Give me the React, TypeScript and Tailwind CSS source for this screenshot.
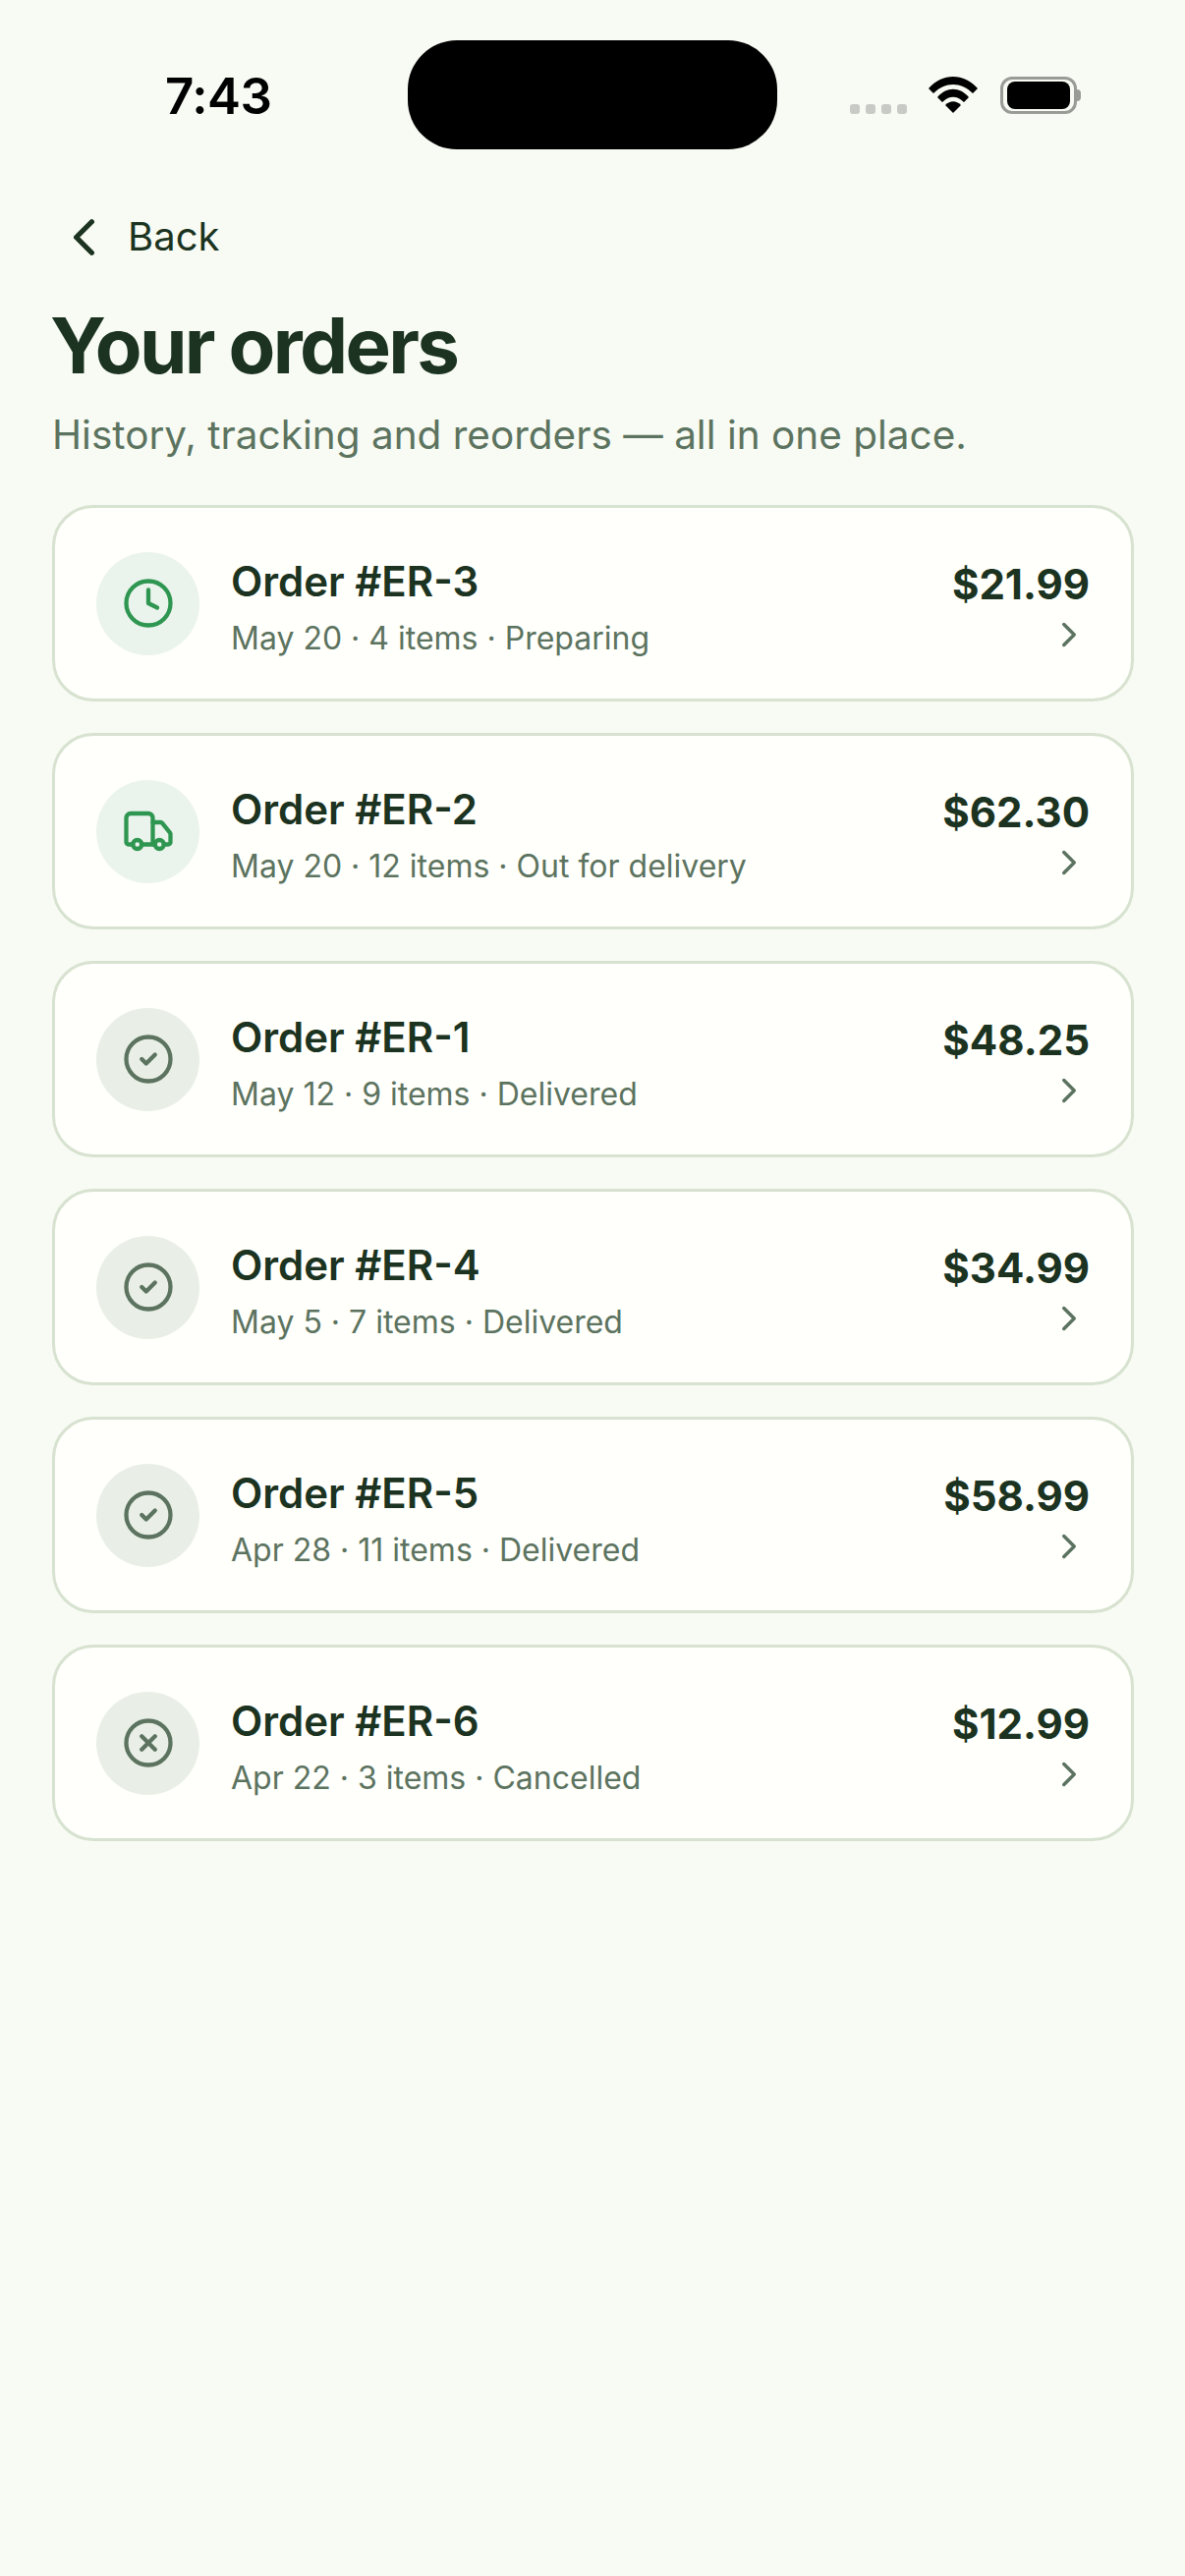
import { ChevronLeft, ChevronRight, CircleCheck, CircleX, Clock, Truck } from "lucide-react";
import type { LucideIcon } from "lucide-react";

interface Order {
  id: string;
  meta: string;
  total: string;
  icon: LucideIcon;
  active?: boolean;
}

const orders: Order[] = [
  { id: "ER-3", meta: "May 20 · 4 items · Preparing", total: "$21.99", icon: Clock, active: true },
  { id: "ER-2", meta: "May 20 · 12 items · Out for delivery", total: "$62.30", icon: Truck, active: true },
  { id: "ER-1", meta: "May 12 · 9 items · Delivered", total: "$48.25", icon: CircleCheck },
  { id: "ER-4", meta: "May 5 · 7 items · Delivered", total: "$34.99", icon: CircleCheck },
  { id: "ER-5", meta: "Apr 28 · 11 items · Delivered", total: "$58.99", icon: CircleCheck },
  { id: "ER-6", meta: "Apr 22 · 3 items · Cancelled", total: "$12.99", icon: CircleX },
];

function StatusBar() {
  return (
    <div className="relative h-[153px] shrink-0">
      <div className="absolute left-[415px] top-[41px] h-[111px] w-[376px] rounded-[50px] bg-black" />
      <div className="absolute left-[168px] top-[68px] font-['Inter',sans-serif] text-[51px] font-semibold leading-[60px] tracking-[-0.5px] text-black">
        7:43
      </div>
      <div className="absolute left-[865px] top-[106px] flex gap-[6px]">
        <div className="h-[10px] w-[10px] rounded-[3px] bg-[#c8cac6]" />
        <div className="h-[10px] w-[10px] rounded-[3px] bg-[#c8cac6]" />
        <div className="h-[10px] w-[10px] rounded-[3px] bg-[#c8cac6]" />
        <div className="h-[10px] w-[10px] rounded-[3px] bg-[#c8cac6]" />
      </div>
      <svg className="absolute left-[945px] top-[78px]" width="50" height="38" viewBox="0 0 50 38" fill="black">
        <path d="M0 12 C14 -4 36 -4 50 12 L45 17 C33 5 17 5 5 17 Z" />
        <path d="M9 21 C18 10 32 10 41 21 L36 26 C29 19 21 19 14 26 Z" />
        <path d="M17 29 C22 24 28 24 33 29 L25 37 Z" />
      </svg>
      <div className="absolute left-[1018px] top-[78px] flex h-[38px] w-[78px] items-center justify-center rounded-[12px] border-[3px] border-[#9a9b97]">
        <div className="h-[28px] w-[64px] rounded-[8px] bg-black" />
      </div>
      <div className="absolute left-[1096px] top-[91px] h-[12px] w-[4px] rounded-r-[4px] bg-[#9a9b97]" />
    </div>
  );
}

function OrderRow({ order }: { order: Order }) {
  const Icon = order.icon;
  return (
    <div className="flex h-[200px] items-center rounded-[42px] border-[3px] border-[#d7e2d0] bg-[#fffffb] pl-[42px] pr-[42px]">
      <div
        className={
          order.active
            ? "flex h-[105px] w-[105px] shrink-0 items-center justify-center rounded-full bg-[#eaf3ec] text-[#2e9650]"
            : "flex h-[105px] w-[105px] shrink-0 items-center justify-center rounded-full bg-[#e9efe6] text-[#5c7360]"
        }
      >
        <Icon size={54} strokeWidth={1.9} />
      </div>
      <div className="ml-[32px] flex min-w-0 flex-1 flex-col pt-[10px]">
        <div className="text-[42px] font-semibold leading-[54px] text-[#1b3320]">Order #{order.id}</div>
        <div className="mt-[7px] text-[32px] leading-[48px] text-[#5c7360]">{order.meta}</div>
      </div>
      <div className="flex shrink-0 flex-col items-end pt-[6px]">
        <div className="text-[42px] font-bold leading-[54px] text-[#1b3320]">{order.total}</div>
        <ChevronRight size={42} strokeWidth={2} className="mt-[3px] text-[#5c7360]" />
      </div>
    </div>
  );
}

export default function App() {
  return (
    <div className="flex h-[2622px] w-[1206px] flex-col overflow-hidden bg-[#f8fbf3] font-['Inter',sans-serif]">
      <StatusBar />
      <div className="flex flex-col pl-[53px] pr-[52px]">
        <div className="mt-[58px] flex h-[60px] items-center gap-[13px] text-[#1b3320]">
          <ChevronLeft size={63} strokeWidth={2} className="ml-[1px]" />
          <span className="text-[40px] leading-[54px]">Back</span>
        </div>
        <h1 className="mt-[36px] -ml-[2px] text-[78px] font-bold leading-[90px] tracking-[-2.7px] text-[#1b3320]">Your orders</h1>
        <p className="mt-[19px] text-[40.5px] leading-[54px] text-[#5c7360]">History, tracking and reorders — all in one place.</p>
        <div className="mt-[44px] flex flex-col gap-[32px]">
          {orders.map((order) => (
            <OrderRow key={order.id} order={order} />
          ))}
        </div>
      </div>
    </div>
  );
}
